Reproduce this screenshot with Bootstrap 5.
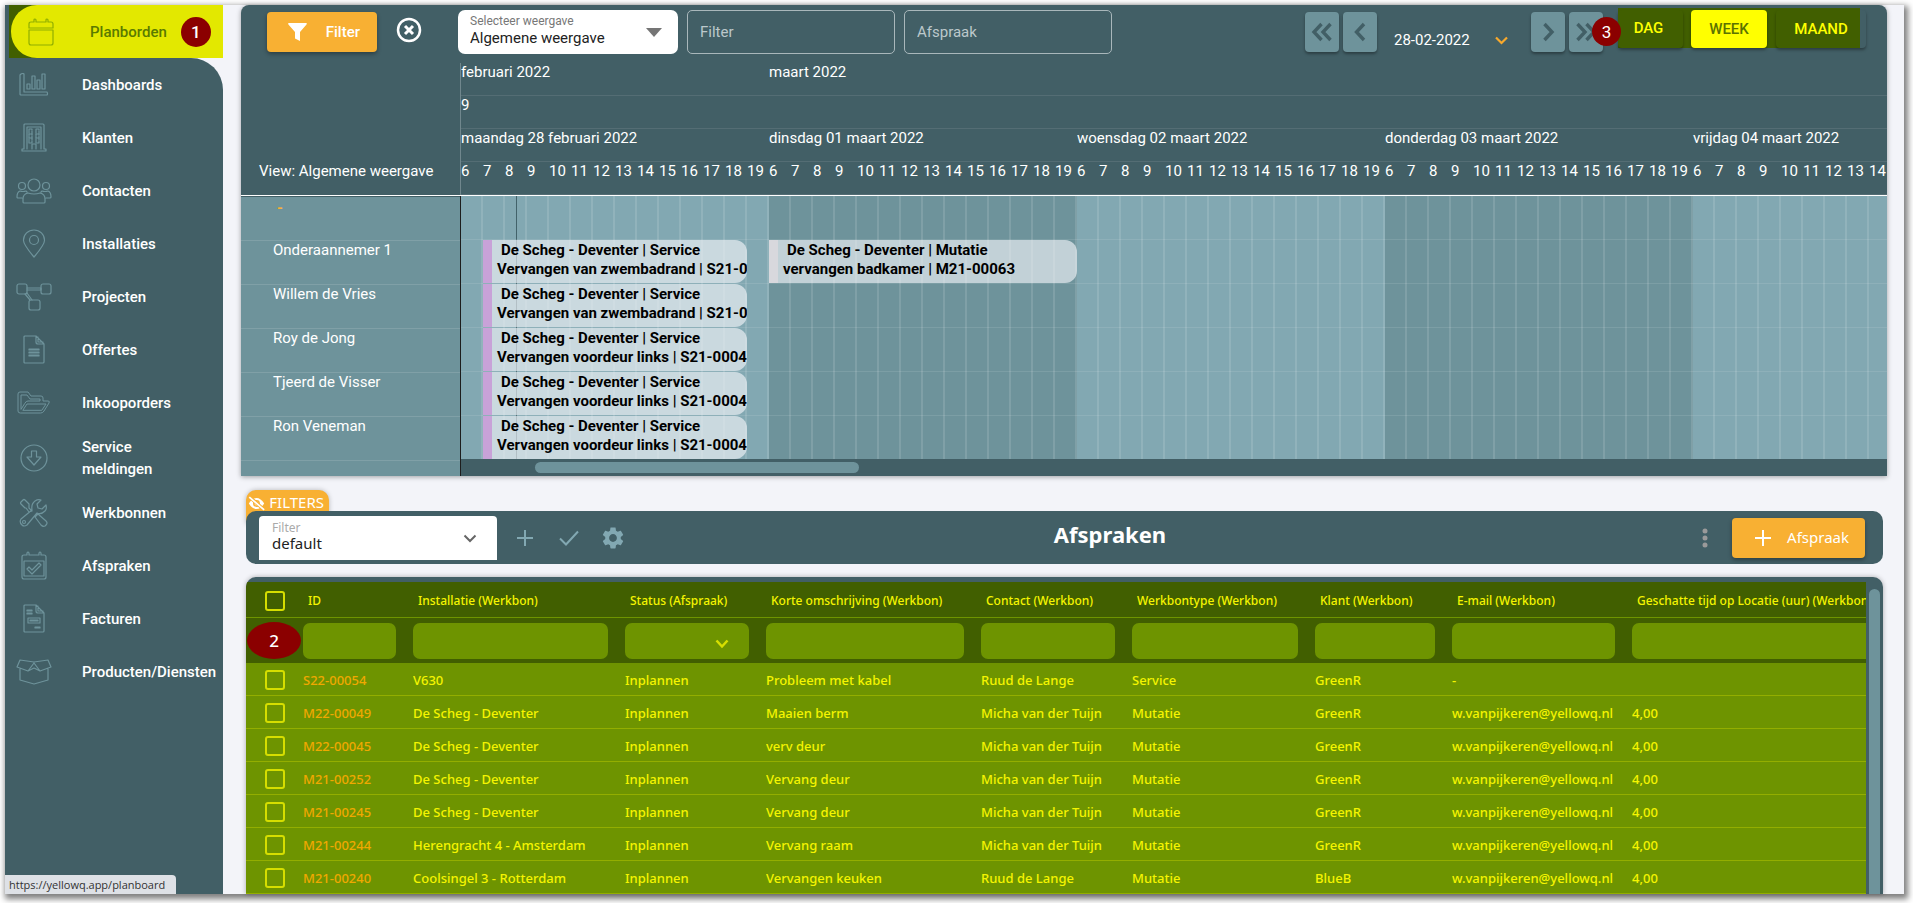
<!DOCTYPE html>
<html lang="nl">
<head>
<meta charset="utf-8">
<meta name="viewport" content="width=device-width, initial-scale=1">
<title>Planborden</title>
<link href="https://cdn.jsdelivr.net/npm/bootstrap@5.3.0/dist/css/bootstrap.min.css" rel="stylesheet">
<style>
:root{--teal:#425f66;--mid:#6e939b;--light:#82a8b2;--page:#f3f4f9;--amber:#f8b033;--olive:#415f00;--moss:#6e9400;--lime:#e3e800;--cell:22px}
body{background:#fff;font-family:Roboto,sans-serif;font-size:15px;line-height:20px;padding:5px 9px 9px 5px;overflow:hidden}
button,input,select{font-family:inherit}
svg{display:block;flex:none}
.shell{background:var(--page);height:calc(100vh - 14px);box-shadow:2px 3px 6px 2px rgba(0,0,0,.5)}
/* sidebar */
.side{width:218px;flex:none}
.side a{color:#fff;font-weight:500;height:53px;line-height:22px;padding-left:11px}
.side a.tall{height:57px}
.side .ico{width:36px;margin-right:30px;display:flex;justify-content:center}
.side svg{stroke:var(--mid);fill:none;stroke-width:1.2;stroke-linejoin:round;stroke-linecap:round}
.side .first{background:linear-gradient(90deg,var(--teal) 4px,var(--olive) 4px 60px,var(--lime) 60px)}
.side .first a{background:var(--lime);color:#5a7a00;margin-left:6px;border-radius:26px 0 0 26px;padding-left:12px}
.side .first svg{stroke:#8fae00}
.side .first .ico{margin-right:31px}
.side .rest{background:var(--teal);border-top-right-radius:32px}
.dot{background:#8b0000;color:#fff;border-radius:50%;font-size:17px;display:flex;align-items:center;justify-content:center}
.dot1{width:30px;height:30px;margin-left:14px}
.dot3{width:29px;height:29px;left:-26px;top:9px}
.dot2{width:54px;height:37px;left:1px;top:4px}
.status{left:5px;bottom:9px;height:19px;width:171px;padding:0 0 0 4px;background:#dee1e6;color:#333;border-top-right-radius:4px;font:11px/20px "Open Sans",sans-serif}
/* planner */
.main{padding:0 17px 0 18px;min-width:0}
.planner{background:var(--teal);border-radius:8px 8px 0 0;box-shadow:0 1px 5px rgba(0,0,0,.35);color:#fff;overflow:hidden}
.bar{height:58px;padding-left:26px}
.btn-amber,.btn-amber:hover{background:var(--amber);color:#fff;font-weight:500;height:40px;border-radius:4px;border:0;font-size:15px;box-shadow:0 2px 4px rgba(0,0,0,.35)}
.pick{background:#fff;border-radius:7px;height:44px;width:220px;padding:4px 16px 0 12px;color:#222}
.pick label,.pick2 label{font-size:12px;line-height:15px;color:#777;display:block}
.pick select,.pick2 select{appearance:none;border:0;background:none;padding:0;width:100%;color:#222;line-height:18px;display:block;outline:0}
.field{height:44px;width:208px;border:1px solid #a9b7bb;border-radius:5px;background:none;color:#fff;padding:0 12px;margin-left:9px}
.field::placeholder{color:#bcc8cb;opacity:1}
.step{width:34px;height:40px;background:var(--mid);border:0;border-radius:4px;padding:0;display:flex;align-items:center;justify-content:center;box-shadow:0 2px 3px rgba(0,0,0,.35)}
.step svg{stroke:var(--teal);stroke-width:3.4;fill:none}
.date{background:none;border:0;color:#fff;padding:0;width:154px;height:30px}
.views{background:var(--olive);height:40px;margin:-8px 27px 0 15px;position:relative}
.views button{height:38px;border:0;border-radius:4px;background:none;color:#ff0;font-weight:500;box-shadow:0 2px 3px rgba(0,0,0,.35)}
.views .on{background:#ff0;color:#5c7300}
.split{display:grid;grid-template-columns:219px minmax(0,1fr)}
.heads{border-left:1px solid #70878d}
.hrow{display:grid;grid-template-columns:repeat(70,var(--cell));height:33px;border-bottom:1px solid #546d74;line-height:18px;white-space:nowrap;overflow:hidden}
.hrow .day{grid-column:span 14}
.names{background:var(--mid);border-top:1px solid var(--teal)}
.names div{height:44px;border-bottom:1px solid #80a0a7;padding:0 32px;line-height:18px}
.names .none{color:var(--amber);font-weight:700;padding-left:36px;line-height:22px}
.chart{border-left:1px solid #1d1d1d;position:relative;overflow:hidden}
.now{position:absolute;left:55px;top:0;width:1px;height:263px;background:rgba(50,80,88,.8)}
.canvas{background:
 repeating-linear-gradient(90deg,transparent 0 20px,rgba(255,255,255,.12) 20px 22px),
 repeating-linear-gradient(90deg,var(--light) 0 308px,var(--mid) 308px 616px)}
.grow{display:grid;grid-template-columns:repeat(70,var(--cell));height:44px;border-bottom:1px solid rgba(255,255,255,.1);position:relative}
.grow:last-child{border:0;height:43px}
.task{border-left:9px solid #c8a2d8;background:rgba(243,244,249,.64);border-radius:0 12px 12px 0;color:#000;font-weight:700;line-height:19px;white-space:nowrap;overflow:hidden;padding:1px 0 0 5px;height:43px;position:relative;z-index:1}
.task span{padding-left:4px}
.task.alt{border-color:#d8d8dd}
.hscroll{height:17px;background:var(--teal);padding:3px 0 0 74px}
.hscroll div{height:11px;width:324px;border-radius:6px;background:var(--mid)}
/* list */
.list{font-family:"Noto Sans",sans-serif;padding:0 4px 0 5px}
.tab{background:var(--amber);color:#fff;width:83px;height:34px;border-radius:10px 10px 0 0;border:0;margin-top:14px;margin-bottom:-13px;padding:2px 5px 2px 2px;line-height:20px;box-shadow:0 0 5px rgba(0,0,0,.25);align-items:flex-start}
.bar2{background:var(--teal);height:53px;border-radius:10px;padding:0 18px 0 13px;position:relative}
.pick2{background:#fff;border-radius:4px 4px 0 0;width:238px;height:44px;padding:4px 20px 0 13px}
.pick2 label{color:#aaa}
.pick2 select{line-height:16px}
.bar2 h1{font-size:22px;font-weight:700;line-height:24px;color:#fff;margin:-8px 0 0;padding-right:98px}
.tool{background:none;border:0;padding:0;width:44px;display:flex;justify-content:center}
.grid{background:var(--teal);border-radius:10px 10px 0 0;margin-top:13px;padding-top:5px;height:317px;overflow:hidden;box-shadow:0 0 5px rgba(0,0,0,.3)}
.gridbox{min-width:0;overflow:hidden;position:relative;border-left:1px solid var(--lime);margin-left:-1px}
.gridbox table{table-layout:fixed;width:100%;font-size:13px;line-height:18px;color:#f5f500;white-space:nowrap;border-collapse:separate;border-spacing:0}
.gridbox th,.gridbox td{padding:0;font-weight:500;overflow:hidden}
.gridbox th{background:var(--olive);font-size:12px}
.gridbox .names2 th{height:36px;border-bottom:1px solid var(--moss);padding:3px 0 0 5px}
.gridbox .names2 th:first-child{padding-left:19px}
.gridbox .filts th{height:45px;padding:0 17px 0 0}
.gridbox .filts th:last-child{padding:0}
.filts input,.filts select{display:block;width:100%;height:36px;border:0;border-radius:7px;background:var(--moss);color:#ff0;appearance:none}
.filts th:last-child input{border-radius:7px 0 0 7px}
.filts svg{position:absolute;right:37px;top:21px}
.gridbox td{background:var(--moss);height:33px;border-bottom:1px solid #93ae00;padding-top:1px}
.gridbox td:first-child{padding-left:19px}
.gridbox a{color:#f0a800;text-decoration:none}
.box{appearance:none;display:block;width:20px;height:20px;border:2px solid #d6de00;border-radius:3px;margin:0}
.vscroll{width:11px;margin:7px 3px 0 3px;background:var(--mid);border-radius:6px 6px 0 0;flex:none}
</style>
</head>
<body>
<div class="shell d-flex">
  <nav class="side d-flex flex-column" aria-label="Hoofdmenu">
    <div class="first">
      <a href="#" class="d-flex align-items-center text-decoration-none"><span class="ico"><svg width="26" height="28" viewBox="0 0 26 28"><path d="M3 4h3V2q0-1 1-1t1 1v2h10V2q0-1 1-1t1 1v2h3q2 0 2 2v4H1V6q0-2 2-2zM1 12h24v13q0 2-2 2H3q-2 0-2-2z"/></svg></span>Planborden<span class="dot dot1">1</span></a>
    </div>
    <div class="rest flex-grow-1" id="menu"></div>
  </nav>

  <main class="main flex-grow-1">
    <section class="planner">
      <div class="bar d-flex pt-2 position-relative align-items-start">
        <button class="btn btn-amber d-flex align-items-center" style="width:110px;margin-top:-1px;padding:0 17px 0 21px"><svg width="19" height="18" viewBox="0 0 19 18" fill="#fff" class="me-auto"><path d="M.5 0h18q.6.8 0 1.400L12 9v9l-5-2.500V9L.4 1.400Q0 .5.500 0z"/></svg>Filter</button>
        <button class="btn p-0 border-0" style="margin:4px 36px 0 19px" aria-label="Wissen"><svg width="26" height="26" viewBox="0 0 26 26" fill="none" stroke="#fff" stroke-width="2.500"><circle cx="13" cy="13" r="11"/><path d="M9 9l8 8M17 9l-8 8" stroke-width="3"/></svg></button>
        <div class="d-flex" style="margin-top:-3px">
          <div class="pick d-flex"><div class="flex-grow-1"><label for="weergave">Selecteer weergave</label><select id="weergave"><option>Algemene weergave</option></select></div><svg width="16" height="10" viewBox="0 0 16 10" fill="#757575" style="margin-top:14px"><path d="M0 0h16L8 9z"/></svg></div>
          <input class="field" placeholder="Filter" aria-label="Filter">
          <input class="field" placeholder="Afspraak" aria-label="Afspraak">
        </div>
        <div class="d-flex ms-auto" style="margin-top:-1px">
          <button class="step" aria-label="Week terug"><svg width="22" height="22" viewBox="0 0 22 22"><path d="M10.500 3L3 11l7.500 8M19.500 3L12 11l7.500 8"/></svg></button>
          <button class="step ms-1" aria-label="Dag terug"><svg width="22" height="22" viewBox="0 0 22 22"><path d="M15 3L7.500 11l7.500 8"/></svg></button>
          <button class="date d-flex align-items-center" style="margin-top:13px;padding-left:17px">28-02-2022<svg class="ms-auto" style="margin-right:23px" width="13" height="9" viewBox="0 0 13 9" fill="none" stroke="#f8a92c" stroke-width="2.200"><path d="M1 1.500l5.500 5.500L12 1.500"/></svg></button>
          <button class="step" aria-label="Dag verder"><svg width="22" height="22" viewBox="0 0 22 22"><path d="M7.500 3L15 11l-7.500 8"/></svg></button>
          <button class="step ms-1" aria-label="Week verder"><svg width="22" height="22" viewBox="0 0 22 22"><path d="M2.500 3L10 11l-7.500 8M11.500 3L19 11l-7.500 8"/></svg></button>
        </div>
        <div class="views d-flex align-items-end" style="margin-top:-5px">
          <span class="dot dot3 position-absolute">3</span>
          <button style="width:65px;padding:0 4px 2px 0">DAG</button>
          <button class="on" style="width:76px;margin-left:8px;padding-bottom:2px">WEEK</button>
          <button style="width:90px;margin:0 -6px 0 9px;padding-bottom:2px">MAAND</button>
        </div>
      </div>
      <div class="split border-bottom border-white">
        <div class="d-flex align-items-end" style="padding:0 0 14px 18px">View: Algemene weergave</div>
        <div class="heads">
          <div class="hrow"><span class="day">februari 2022</span><span class="day">maart 2022</span></div>
          <div class="hrow"><span>9</span></div>
          <div class="hrow"><span class="day">maandag 28 februari 2022</span><span class="day">dinsdag 01 maart 2022</span><span class="day">woensdag 02 maart 2022</span><span class="day">donderdag 03 maart 2022</span><span class="day">vrijdag 04 maart 2022</span></div>
          <div class="hrow" id="hours"></div>
        </div>
      </div>
      <div class="split">
        <div class="names"><div class="none">-</div><div>Onderaannemer 1</div><div>Willem de Vries</div><div>Roy de Jong</div><div>Tjeerd de Visser</div><div>Ron Veneman</div></div>
        <div class="chart">
          <div class="now"></div>
          <div class="canvas" id="canvas"></div>
          <div class="hscroll"><div></div></div>
        </div>
      </div>
    </section>

    <section class="list">
      <button class="tab d-flex"><svg width="17" height="15" viewBox="0 0 20 16" style="margin-top:4px"><path d="M1 8q4-6.500 9-6.500T19 8q-4 6.500-9 6.500T1 8z" fill="#fff"/><circle cx="10" cy="8" r="4" fill="#f8b033"/><circle cx="10" cy="8" r="2.300" fill="#fff"/><path d="M1.500 0l17 15" stroke="#f8b033" stroke-width="4"/><path d="M1.500 .5l17.500 15" stroke="#fff" stroke-width="2"/></svg><span class="ms-auto">FILTERS</span></button>
      <div class="bar2 d-flex align-items-center">
        <div class="pick2 d-flex"><div class="flex-grow-1"><label for="flt">Filter</label><select id="flt"><option>default</option></select></div><svg width="14" height="9" viewBox="0 0 14 9" fill="none" stroke="#666" stroke-width="2" style="margin-top:14px"><path d="M1.500 1.500L7 7l5.500-5.500"/></svg></div>
        <button class="tool" style="margin-left:6px" aria-label="Toevoegen"><svg width="16" height="16" fill="none" stroke="#82a8b2" stroke-width="2"><path d="M8 0v16M0 8h16"/></svg></button>
        <button class="tool" aria-label="Toepassen"><svg width="20" height="16" fill="none" stroke="#82a8b2" stroke-width="2"><path d="M1 8.500l6 6L19 1.500"/></svg></button>
        <button class="tool" aria-label="Instellingen"><svg width="26" height="26" viewBox="0 0 24 24" fill="#82a8b2"><path d="M19.140 12.940c.04-.3.060-.61.060-.94 0-.32-.02-.64-.07-.94l2.030-1.580c.18-.14.230-.41.120-.61l-1.920-3.320c-.12-.22-.37-.29-.59-.22l-2.390.96c-.5-.38-1.030-.7-1.620-.94l-.36-2.540c-.04-.24-.24-.41-.48-.41h-3.840c-.24 0-.43.170-.47.410l-.36 2.540c-.59.240-1.130.57-1.620.94l-2.390-.96c-.22-.08-.47 0-.59.220L2.740 8.870c-.12.210-.08.470.12.610l2.030 1.580c-.05.300-.09.630-.09.940s.02.640.070.940l-2.030 1.580c-.18.140-.23.410-.12.610l1.920 3.320c.12.220.370.290.590.220l2.390-.96c.5.380 1.030.7 1.620.94l.36 2.540c.05.240.240.410.480.410h3.840c.24 0 .44-.17.470-.41l.36-2.540c.59-.24 1.130-.56 1.620-.94l2.390.96c.22.080.470 0 .59-.22l1.920-3.320c.12-.22.070-.47-.12-.61l-2.010-1.580zM12 15.600c-1.980 0-3.600-1.620-3.600-3.600s1.620-3.600 3.600-3.600 3.600 1.620 3.600 3.600-1.620 3.600-3.600 3.600z"/></svg></button>
        <h1 class="flex-grow-1 text-center">Afspraken</h1>
        <button class="tool" aria-label="Meer"><svg width="6" height="20" fill="#9a9a9a"><circle cx="3" cy="3" r="2.500"/><circle cx="3" cy="10" r="2.500"/><circle cx="3" cy="17" r="2.500"/></svg></button>
        <button class="btn btn-amber d-flex align-items-center fw-normal" style="width:133px;margin-left:5px;padding:0 16px 0 23px"><svg width="16" height="16" class="me-auto" fill="none" stroke="#fff" stroke-width="2"><path d="M8 0v16M0 8h16"/></svg>Afspraak</button>
      </div>

      <div class="grid d-flex">
        <div class="gridbox flex-grow-1">
          <table>
            <colgroup><col style="width:57px"><col style="width:110px"><col style="width:212px"><col style="width:141px"><col style="width:215px"><col style="width:151px"><col style="width:183px"><col style="width:137px"><col style="width:180px"><col></colgroup>
            <thead>
              <tr class="names2"><th><input type="checkbox" class="box" aria-label="Alles selecteren"></th><th>ID</th><th>Installatie (Werkbon)</th><th>Status (Afspraak)</th><th>Korte omschrijving (Werkbon)</th><th>Contact (Werkbon)</th><th>Werkbontype (Werkbon)</th><th>Klant (Werkbon)</th><th>E-mail (Werkbon)</th><th>Geschatte tijd op Locatie (uur) (Werkbon)</th></tr>
              <tr class="filts"><th class="position-relative"><span class="dot dot2 position-absolute">2</span></th><th><input aria-label="ID"></th><th><input aria-label="Installatie"></th><th class="position-relative"><select aria-label="Status"><option></option></select><svg width="14" height="10" viewBox="0 0 14 10" fill="none" stroke="#d6de00" stroke-width="2.500"><path d="M1.500 1.500L7 7.500l5.500-6"/></svg></th><th><input aria-label="Korte omschrijving"></th><th><input aria-label="Contact"></th><th><input aria-label="Werkbontype"></th><th><input aria-label="Klant"></th><th><input aria-label="E-mail"></th><th><input aria-label="Geschatte tijd"></th></tr>
            </thead>
            <tbody id="rows"></tbody>
          </table>
        </div>
        <div class="vscroll"></div>
      </div>
    </section>
  </main>
</div>
<div class="status position-absolute">https://yellowq.app/planboard</div>

<script>
const icons = {
  Dashboards:'<svg width="30" height="24"><path d="M2 1q2-1 3 0v18h23q1 2 0 3H2q-1 0-1-1V2zM8 11h3v5H8zM13 3h3v13h-3zM18 7h3v9h-3zM23 1h3v15h-3z"/></svg>',
  Klanten:'<svg width="26" height="30"><path d="M3 26V2q0-1 1-1h18q1 0 1 1v24h2v2H1v-2h2zM6 26V4h14v22M11 26v-5h4v5"/><g stroke-dasharray="4 1"><path d="M8 6h3v14H8zM15 6h3v14h-3z"/></g><path d="M8 11h3M8 15h3M15 11h3M15 15h3"/></svg>',
  Contacten:'<svg width="36" height="26"><circle cx="18" cy="7" r="6"/><circle cx="6" cy="8" r="3.500"/><circle cx="30" cy="8" r="3.500"/><path d="M8 25q-1 0-1-1v-3q0-5 5-6 6 2 12 0 5 1 5 6v3q0 1-1 1zM6 20H2q-1 0-1-1 0-5 3-6 3 1 6 0l1 1M30 20h4q1 0 1-1 0-5-3-6-3 1-6 0l-1 1"/></svg>',
  Installaties:'<svg width="24" height="30"><path d="M12 28Q1 15 1.500 11a10.500 10 0 0 1 21 0Q23 15 12 28z"/><circle cx="12" cy="11" r="4.500"/></svg>',
  Projecten:'<svg width="36" height="30"><rect x="1" y="2" width="10" height="10" rx="2"/><rect x="25" y="2" width="10" height="10" rx="2"/><rect x="13" y="18" width="11" height="10" rx="2"/><path d="M11 6h14v2H11M9 12l5 6M11 11l5 7"/></svg>',
  Offertes:'<svg width="24" height="30"><path d="M3 1h11l8 8v18q0 1-1 1H3q-1 0-1-1V2q0-1 1-1zM14 1v6q0 2 2 2h6M16 2v5h5"/><path d="M7 14h10v1H7zM7 17h10v1H7zM7 20h10v1H7z"/></svg>',
  Inkooporders:'<svg width="34" height="24" style="stroke-width:1"><path d="M3 22q-2 0-2-2V3q0-2 2-2h8l3 4h10q2 0 2 2v3h5q2 0 1 2l-5 8q-1 2-3 2zM4 18V4h6l3 4h10v2H11q-2 0-3 2zM6 19l4-6h19l-4 6z"/></svg>',
  'Service<br>meldingen':'<svg width="30" height="30"><circle cx="15" cy="15" r="13"/><path d="M12.500 8h5v6H22l-7 8-7-8h4.500z"/></svg>',
  Werkbonnen:'<svg width="30" height="30"><path d="M2 4l2-2q1-1 2 0l4 4v4l3 3-3 1-3-4H6L2 6q-1-1 0-2zM16 19l3-3 8 7q2 2 0 4l-1 1q-2 1-4-1zM13 12q-1-6 3-9 3-2 6-1l-4 4 1 4 4 1 4-4q1 4-1 6-4 4-8 2L8 27q-3 2-5 0-3-3-1-6z"/><circle cx="5" cy="24" r="1.500"/></svg>',
  Afspraken:'<svg width="26" height="30"><path d="M3 4h3V2q1-2 2 0v2h10V2q1-2 2 0v2h3q2 0 2 2v20q0 2-2 2H3q-2 0-2-2V6q0-2 2-2zM3 10h20v15H3zM6 18l2-2 3 3 7-7 2 2-9 9z"/></svg>',
  Facturen:'<svg width="24" height="30"><path d="M3 1h11l8 8v18q0 1-1 1H3q-1 0-1-1V2q0-1 1-1zM14 1v6q0 2 2 2h6M16 2v5h5"/><path d="M5 6h5v1H5zM5 9h5v1H5zM6 14h12v5H6zM8 16h8v1H8zM13 23h5v1h-5z"/></svg>',
  'Producten/Diensten':'<svg width="36" height="26"><path d="M4 1l14 2 14-2 3 7-11 4-6-8-6 8L1 8zM4 10v11l14 4 14-4V10M12 12l6-3 6 3"/></svg>'
};
document.getElementById('menu').innerHTML = Object.entries(icons).map(([name, svg]) =>
  `<a href="#" class="d-flex align-items-center text-decoration-none${name.includes('<br>') ? ' tall' : ''}"><span class="ico">${svg}</span><span>${name}</span></a>`).join('');

document.getElementById('hours').innerHTML = Array.from({length: 65}, (_, i) => `<span>${6 + i % 14}</span>`).join('');

const task = (start, span, kind, text, cls = '') =>
  `<div class="task ${cls}" style="grid-column:${start}/span ${span}"><span>De Scheg - Deventer | ${kind}</span><br>${text}</div>`;
const pool = 'Vervangen van zwembadrand | S21-00048', door = 'Vervangen voordeur links | S21-00047';
document.getElementById('canvas').innerHTML = [
  '',
  task(2, 12, 'Service', pool) + task(15, 14, 'Mutatie', 'vervangen badkamer | M21-00063', 'alt'),
  task(2, 12, 'Service', pool), task(2, 12, 'Service', door), task(2, 12, 'Service', door), task(2, 12, 'Service', door)
].map(r => `<div class="grow">${r}</div>`).join('');

const mail = 'w.vanpijkeren@yellowq.nl', micha = 'Micha van der Tuijn', scheg = 'De Scheg - Deventer';
document.getElementById('rows').innerHTML = [
  ['S22-00054', 'V630', 'Probleem met kabel', 'Ruud de Lange', 'Service', 'GreenR', '-', ''],
  ['M22-00049', scheg, 'Maaien berm', micha, 'Mutatie', 'GreenR', mail, '4,00'],
  ['M22-00045', scheg, 'verv deur', micha, 'Mutatie', 'GreenR', mail, '4,00'],
  ['M21-00252', scheg, 'Vervang deur', micha, 'Mutatie', 'GreenR', mail, '4,00'],
  ['M21-00245', scheg, 'Vervang deur', micha, 'Mutatie', 'GreenR', mail, '4,00'],
  ['M21-00244', 'Herengracht 4 - Amsterdam', 'Vervang raam', micha, 'Mutatie', 'GreenR', mail, '4,00'],
  ['M21-00240', 'Coolsingel 3 - Rotterdam', 'Vervangen keuken', 'Ruud de Lange', 'Mutatie', 'BlueB', mail, '4,00']
].map(([id, inst, ...more]) =>
  `<tr><td><input type="checkbox" class="box" aria-label="${id}"></td><td><a href="#">${id}</a></td><td>${inst}</td><td>Inplannen</td>${more.map(v => `<td>${v}</td>`).join('')}</tr>`).join('');
</script>
<script src="https://cdn.jsdelivr.net/npm/bootstrap@5.3.0/dist/js/bootstrap.bundle.min.js"></script>
</body>
</html>
